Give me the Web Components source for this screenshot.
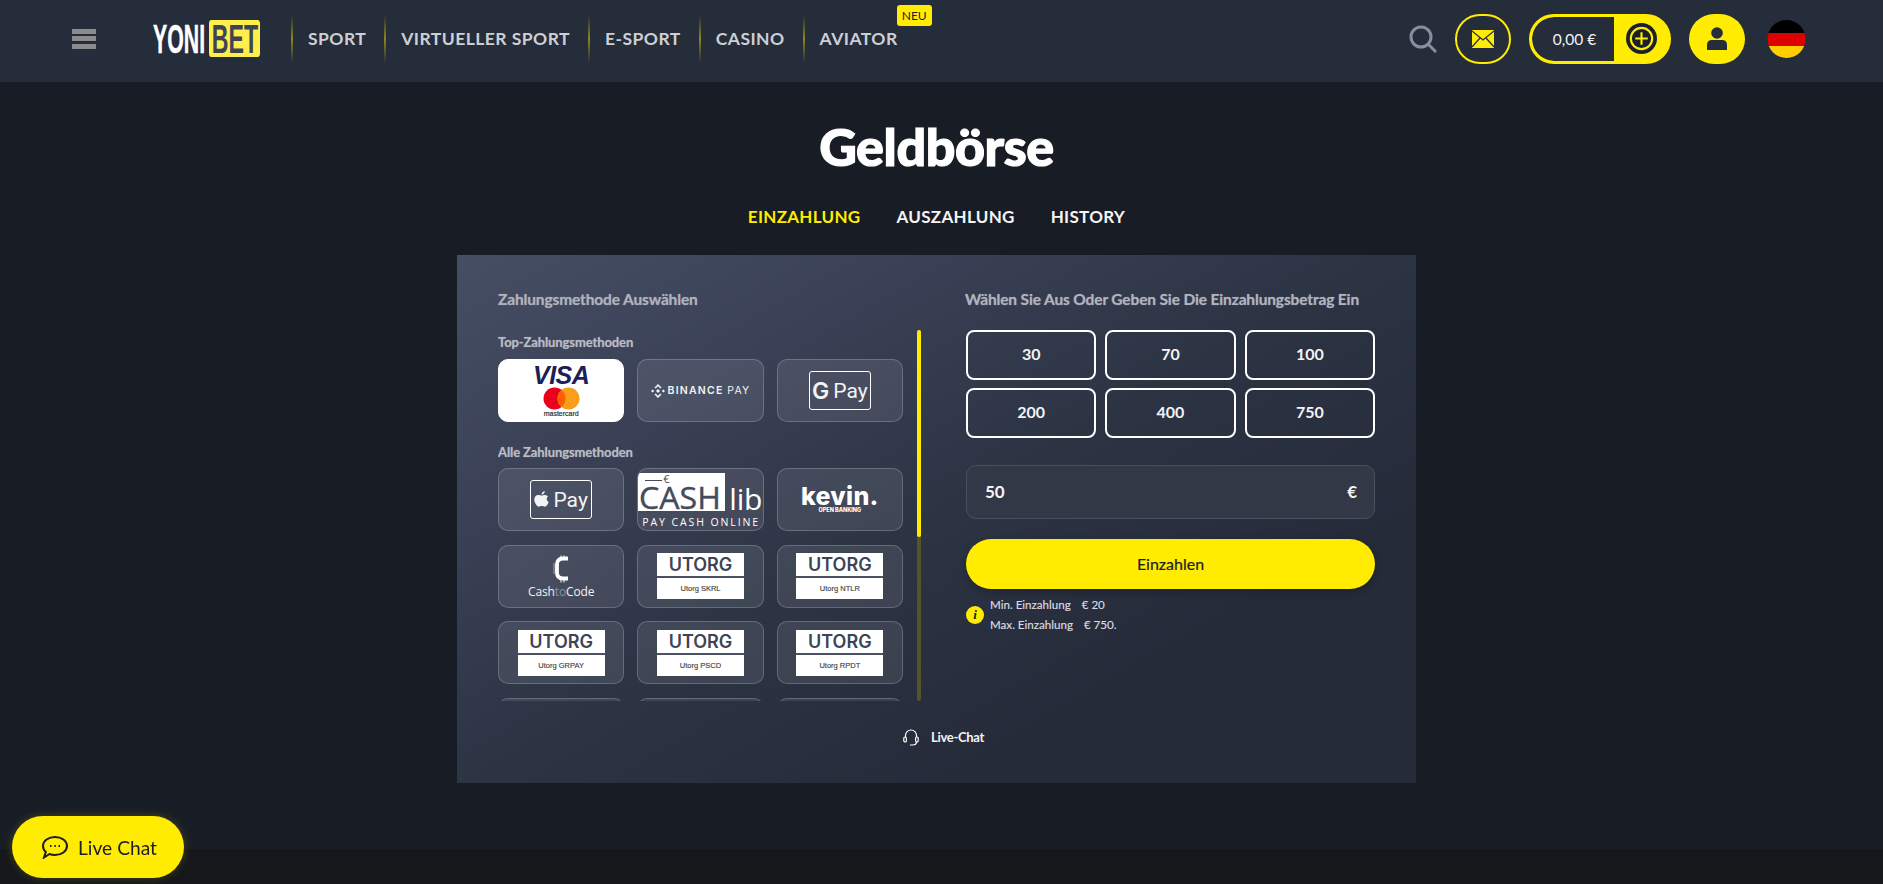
<!DOCTYPE html>
<html lang="de">
<head>
<meta charset="utf-8">
<title>Geldbörse</title>
<style>
    html, body { margin: 0; height: 884px; overflow: hidden; background: #181c25; }
    body { font-family: "Lato", "Noto Sans", sans-serif; color: #fff; }
</style>
</head>
<body>
<yb-header></yb-header>
<wallet-page></wallet-page>
<yb-footer></yb-footer>
<chat-button></chat-button>

<script>
function define(name, html) {
    customElements.define(name, class extends HTMLElement {
        constructor() {
            super();
            this.attachShadow({ mode: 'open' });
            this.shadowRoot.innerHTML = typeof html === 'function' ? html(this) : html;
        }
    });
}

// the logo letters are condensed by squeezing the svg viewBox
define('yb-logo', `
    <style>
        :host { display: flex; width: 108px; height: 37px; align-items: center; justify-content: space-between; }
        svg { display: block; overflow: visible; }
        text { font-family: "Liberation Sans", sans-serif; font-weight: 700; font-size: 41px; }
    </style>
    <svg width="54" height="37" viewBox="0 0 104 37" preserveAspectRatio="none"><text x="2" y="33" fill="#fff" stroke="#fff" stroke-width=".5">YONI</text></svg>
    <svg width="51" height="37" viewBox="0 0 90 37" preserveAspectRatio="none"><rect width="90" height="37" rx="4" fill="#ffef4a"/><text x="5" y="33" fill="#3f4454">BET</text></svg>
`);

define('nav-item', (el) => `
    <style>
        :host { display: block; position: relative; height: 48px; padding: 0 18px 0 17px; font-size: 17.5px; font-weight: 700; line-height: 47px; color: #cdcfd4; letter-spacing: .45px; white-space: nowrap; }
        :host::before { content: ""; position: absolute; left: 0; top: 0; width: 2px; height: 48px; background: linear-gradient(to bottom, transparent, #8c8714 50%, transparent); }
        .neu { position: absolute; right: -16px; top: -10px; background: #ffec00; color: #1b1e26; font-size: 12px; line-height: 21px; height: 21px; padding: 0 5px; border-radius: 3px; letter-spacing: 0; font-weight: 400; }
    </style>
    <slot></slot>${el.hasAttribute('neu') ? '<span class="neu">NEU</span>' : ''}
`);

define('yb-header', `
    <style>
        :host { display: flex; height: 82px; align-items: center; background: #252c3a; padding: 0 77px 5px 72px; box-sizing: border-box; }
        .burger { width: 24px; height: 20px; margin-right: 56px; display: flex; flex-direction: column; justify-content: space-between; }
        .burger i { display: block; height: 5px; background: #8a8b8d; }
        nav { display: flex; margin-left: 31px; }
        .right { margin-left: auto; display: flex; align-items: center; }
        .search { width: 28px; height: 28px; margin-right: 18px; }
        .round { width: 56px; height: 50px; box-sizing: border-box; border-radius: 25px; display: flex; align-items: center; justify-content: center; }
        .mail { border: 2px solid #ffec00; }
        .balance { width: 142px; height: 50px; box-sizing: border-box; margin: 0 18px; border-radius: 25px; border: 3px solid #ffec00; display: flex; background: #ffec00; overflow: hidden; }
        .amount { width: 82px; box-sizing: border-box; background: #252c3a; border-radius: 22px 0 0 22px; font-size: 15.5px; line-height: 44px; text-align: center; padding-left: 3px; color: #f2f3f4; }
        .plus { flex: 1; display: flex; align-items: center; justify-content: center; }
        .user { background: #ffec00; }
        .flag { width: 39px; height: 38px; margin-left: 22px; }
    </style>
    <div class="burger"><i></i><i></i><i></i></div>
    <yb-logo></yb-logo>
    <nav>
        <nav-item>SPORT</nav-item>
        <nav-item>VIRTUELLER SPORT</nav-item>
        <nav-item>E-SPORT</nav-item>
        <nav-item>CASINO</nav-item>
        <nav-item neu>AVIATOR</nav-item>
    </nav>
    <div class="right">
        <svg class="search" viewBox="0 0 28 28" fill="none" stroke="#8b8c9e" stroke-width="3"><circle cx="12" cy="12" r="10"/><path d="M19.5 19.5 L27 27"/></svg>
        <div class="round mail">
            <svg width="22" height="18" viewBox="0 0 22 18"><rect width="22" height="18" fill="#ffec00"/><path d="M0 1 L11 10 L22 1 M0 17 L8 8 M22 17 L14 8" fill="none" stroke="#252c3a" stroke-width="1.2"/></svg>
        </div>
        <div class="balance">
            <div class="amount">0,00 €</div>
            <div class="plus">
                <svg width="31" height="31" viewBox="0 0 32 32"><circle cx="16" cy="16" r="16" fill="#1c2029"/><circle cx="16" cy="16" r="11" fill="none" stroke="#ffec00" stroke-width="2.2"/><path d="M16 9.5 V22.5 M9.5 16 H22.5" stroke="#ffec00" stroke-width="2.2"/></svg>
            </div>
        </div>
        <div class="round user">
            <svg width="20" height="23" viewBox="0 0 20 23" fill="#252c3a"><circle cx="10" cy="6" r="5.8"/><path d="M0 23 V18 Q0 13 5 13 H15 Q20 13 20 18 V23 Z"/></svg>
        </div>
        <svg class="flag" viewBox="0 0 39 38"><clipPath id="c"><circle cx="19.5" cy="19" r="19"/></clipPath><g clip-path="url(#c)"><rect width="39" height="13" fill="#000"/><rect y="13" width="39" height="13" fill="#dd0000"/><rect y="26" width="39" height="12" fill="#ffce00"/></g></svg>
    </div>
`);

define('pay-card', `
    <style>
        :host { display: flex; height: 63px; box-sizing: border-box; align-items: center; justify-content: center; border: 1px solid rgba(255,255,255,.2); border-radius: 10px; background: rgba(255,255,255,.09); overflow: hidden; position: relative; }
        :host([selected]) { background: #fff; border-color: #fff; }
    </style>
    <slot></slot>
`);

define('visa-logo', `
    <style>
        :host { display: flex; flex-direction: column; align-items: center; font-family: "Liberation Sans", sans-serif; margin-top: 1px; }
        .visa { color: #1b2158; font-size: 25px; line-height: 20px; font-weight: 700; font-style: italic; letter-spacing: -.5px; }
        svg { display: block; margin-top: 2px; }
        .mc { color: #333; font-size: 7px; line-height: 8px; font-weight: 400; -webkit-text-stroke: .2px #333; }
    </style>
    <div class="visa">VISA</div>
    <svg width="37" height="23" viewBox="0 0 37 23"><circle cx="11.5" cy="11.5" r="11" fill="#eb001b"/><circle cx="25.5" cy="11.5" r="11" fill="#f79e1b"/><path d="M18.5 3 a11 11 0 0 1 0 17 a11 11 0 0 1 0 -17" fill="#ff5f00"/></svg>
    <div class="mc">mastercard</div>
`);

define('binance-logo', `
    <style>
        :host { display: flex; align-items: center; gap: 3px; color: #f2f3f4; font-family: "Inter", sans-serif; font-size: 10.5px; font-weight: 600; letter-spacing: 1.2px; white-space: nowrap; }
        b { font-weight: 400; }
    </style>
    <svg width="14" height="14" viewBox="0 0 14 14" fill="#f2f3f4"><path d="M7 0 L10.5 3.5 L9.4 4.6 L7 2.2 L4.6 4.6 L3.5 3.5 Z M7 14 L3.5 10.5 L4.6 9.4 L7 11.8 L9.4 9.4 L10.5 10.5 Z M0 7 L1.6 5.4 L3.2 7 L1.6 8.6 Z M14 7 L12.4 8.6 L10.8 7 L12.4 5.4 Z M7 5 L9 7 L7 9 L5 7 Z"/></svg>
    <span>BINANCE <b>PAY</b></span>
`);

define('wallet-logo', `
    <style>
        :host { display: flex; width: 62px; height: 39px; box-sizing: border-box; border: 1px solid #fff; border-radius: 3px; align-items: center; justify-content: center; gap: 4px; font-family: "Roboto", sans-serif; font-size: 21px; font-weight: 400; color: #f2f3f4; }
    </style>
    <slot></slot>
`);

define('cashlib-logo', `
    <style>
        :host { display: block; position: relative; width: 100%; height: 100%; font-family: "Open Sans", sans-serif; color: #fff; }
        .white { position: absolute; left: 0; top: 4px; width: 87px; height: 40px; box-sizing: border-box; background: #fff; color: #444b5d; border-bottom: 2px solid #444b5d; }
        .euro { position: absolute; left: 7px; top: 0; font-size: 11px; line-height: 12px; }
        .euro::before { content: ""; display: inline-block; width: 17px; height: 1px; background: #444b5d; vertical-align: middle; margin-right: 1px; }
        svg { position: absolute; left: 0; top: 12px; overflow: visible; }
        svg text { font-family: "Open Sans", sans-serif; font-size: 31px; fill: #444b5d; stroke: #444b5d; stroke-width: .4; }
        .lib { position: absolute; left: 91px; top: 15px; font-size: 30px; line-height: 30px; letter-spacing: -.2px; }
        .pay { position: absolute; left: 4px; top: 46px; font-size: 10.5px; line-height: 14px; letter-spacing: 1.9px; white-space: nowrap; }
    </style>
    <div class="white"><span class="euro">€</span><svg width="87" height="26" viewBox="0 0 84 26" preserveAspectRatio="none"><text x="1" y="24">CASH</text></svg></div>
    <div class="lib">lib</div>
    <div class="pay">PAY CASH ONLINE</div>
`);

define('kevin-logo', `
    <style>
        :host { display: block; text-align: center; color: #fff; font-family: "Inter", sans-serif; font-weight: 800; }
        .k { font-size: 25px; line-height: 22px; letter-spacing: .3px; }
        .o { font-size: 5.5px; line-height: 7px; }
    </style>
    <div class="k">kevin.</div>
    <div class="o">OPEN BANKING</div>
`);

define('cashtocode-logo', `
    <style>
        :host { display: flex; flex-direction: column; align-items: center; color: #f2f3f4; font-family: "Open Sans", sans-serif; font-size: 12px; line-height: 15px; letter-spacing: -.15px; margin-top: 2px; }
        svg { display: block; margin-bottom: 1px; }
        i { font-style: normal; opacity: .4; }
    </style>
    <svg width="17" height="28" viewBox="0 0 17 28" fill="none" stroke="#fff"><path d="M15 3.5 H10 Q4 3.5 4 9.5 V17.5 Q4 23.5 10 23.5 H15" stroke-width="3.8"/><path d="M8 .5 V3.5 M11 .5 V3.5 M8 23.5 V27.5 M11 23.5 V27.5" stroke-width="1"/><path d="M1 8 V19" stroke-width="1" stroke="#aaa"/></svg>
    <div>Cash<i>to</i>Code</div>
`);

define('utorg-logo', (el) => `
    <style>
        :host { display: block; width: 87px; font-family: "Liberation Sans", sans-serif; text-align: center; background: #fff; }
        .top { height: 23px; font-family: "Inter", sans-serif; font-weight: 600; font-size: 18px; line-height: 23px; color: #3d4456; border-bottom: 2px solid #4a5163; }
        .sub { height: 21px; font-size: 7.5px; line-height: 21px; color: #444; -webkit-text-stroke: .15px #444; }
    </style>
    <div class="top">UTORG</div>
    <div class="sub">Utorg ${el.getAttribute('name')}</div>
`);

define('method-list', `
    <style>
        :host { display: block; width: 405px; height: 371px; overflow: hidden; }
        h4 { margin: 0; font-size: 13px; line-height: 16px; height: 29px; padding-top: 4px; box-sizing: border-box; font-weight: 700; color: #b9bcc5; letter-spacing: -.1px; text-shadow: 0 0 1px rgba(185,188,197,.6); }
        h4.all { margin-top: 16px; padding-top: 6px; height: 30px; }
        .grid { display: grid; grid-template-columns: repeat(3, 1fr); gap: 13.6px 13px; }
    </style>
    <h4>Top-Zahlungsmethoden</h4>
    <div class="grid">
        <pay-card selected><visa-logo></visa-logo></pay-card>
        <pay-card><binance-logo></binance-logo></pay-card>
        <pay-card><wallet-logo><b style="font-family:'Inter',sans-serif;font-size:23px;font-weight:600">G</b>Pay</wallet-logo></pay-card>
    </div>
    <h4 class="all">Alle Zahlungsmethoden</h4>
    <div class="grid">
        <pay-card><wallet-logo>
            <svg width="15" height="18" viewBox="0 0 15 18" fill="#f2f3f4"><path d="M10.8 0 C10.9 1.6 9.5 3.6 7.6 3.7 C7.4 2 9 0.2 10.8 0 Z M7.7 4.6 C8.6 4.6 9.7 3.8 11 3.9 C12.4 4 13.5 4.6 14.1 5.6 C12 6.9 12.4 10 14.7 11 C14.1 12.8 12.5 15.7 10.8 15.7 C9.6 15.7 9.2 15 7.8 15 C6.4 15 5.9 15.7 4.8 15.7 C2.9 15.7 .3 11.7 .3 8.6 C.3 5.6 2.2 3.9 4.1 3.9 C5.6 3.9 6.8 4.6 7.7 4.6 Z"/></svg>Pay</wallet-logo></pay-card>
        <pay-card><cashlib-logo></cashlib-logo></pay-card>
        <pay-card><kevin-logo></kevin-logo></pay-card>
        <pay-card><cashtocode-logo></cashtocode-logo></pay-card>
        <pay-card><utorg-logo name="SKRL"></utorg-logo></pay-card>
        <pay-card><utorg-logo name="NTLR"></utorg-logo></pay-card>
        <pay-card><utorg-logo name="GRPAY"></utorg-logo></pay-card>
        <pay-card><utorg-logo name="PSCD"></utorg-logo></pay-card>
        <pay-card><utorg-logo name="RPDT"></utorg-logo></pay-card>
        <pay-card></pay-card>
        <pay-card></pay-card>
        <pay-card></pay-card>
    </div>
`);

define('amount-form', `
    <style>
        :host { display: block; width: 409px; }
        .amounts { display: grid; grid-template-columns: repeat(3, 1fr); gap: 8.5px 9px; }
        .amounts div { height: 49.5px; box-sizing: border-box; border: 2px solid #fff; border-radius: 8px; text-align: center; line-height: 44px; font-size: 16px; font-weight: 700; color: #f4f4f6; }
        .input { margin-top: 27.5px; height: 54px; box-sizing: border-box; border: 1px solid #4a5060; border-radius: 10px; background: #323846; display: flex; justify-content: space-between; padding: 0 17px 0 18px; line-height: 52px; font-size: 17px; font-weight: 700; color: #f4f4f6; }
        .go { margin-top: 20px; height: 50px; border-radius: 25px; background: #ffec00; color: #1b1e26; text-align: center; line-height: 50px; font-size: 16px; -webkit-text-stroke: .2px #1b1e26; box-shadow: 0 3px 8px rgba(0,0,0,.25); }
        .info { margin-top: 6px; display: flex; align-items: center; gap: 6px; font-size: 11.6px; line-height: 19.5px; color: #dcdde1; -webkit-text-stroke: .15px #dcdde1; }
        .i { width: 18px; height: 18px; border-radius: 50%; background: #ffec00; color: #1b1e26; font: italic 700 13px/18px "Liberation Serif", serif; text-align: center; -webkit-text-stroke: 0; }
        .info span { margin-left: 8px; }
    </style>
    <div class="amounts">
        <div>30</div><div>70</div><div>100</div>
        <div>200</div><div>400</div><div>750</div>
    </div>
    <div class="input"><span>50</span><span>€</span></div>
    <div class="go">Einzahlen</div>
    <div class="info">
        <div class="i">i</div>
        <div>
            <div>Min. Einzahlung <span>€ 20</span></div>
            <div>Max. Einzahlung <span>€ 750.</span></div>
        </div>
    </div>
`);

define('wallet-panel', `
    <style>
        :host { display: block; width: 959px; height: 528px; box-sizing: border-box; padding: 34px 41px 0; background: linear-gradient(150deg, #464e64 0%, #3a4156 25%, #2c3343 50%, #252b39 75%, #252b39 100%); }
        .cols { display: flex; gap: 45px; }
        h3 { margin: 0 0 21px; height: 20px; font-size: 15.5px; line-height: 20px; font-weight: 700; color: #b0b3bd; white-space: nowrap; letter-spacing: -.14px; text-shadow: 0 0 1px rgba(176,179,189,.6); }
        .right h3 { margin-left: -1px; }
        .scroll { display: flex; gap: 14px; }
        .bar { width: 4px; height: 371px; background: #55532a; border-radius: 2px; }
        .bar i { display: block; height: 207px; background: #ffec00; border-radius: 2px; }
        .help { margin-top: 26px; height: 20px; display: flex; align-items: center; justify-content: center; gap: 12px; padding-left: 14px; font-size: 13px; font-weight: 700; color: #f4f4f6; letter-spacing: -.3px; }
    </style>
    <div class="cols">
        <div class="left">
            <h3>Zahlungsmethode Auswählen</h3>
            <div class="scroll"><method-list></method-list><div class="bar"><i></i></div></div>
        </div>
        <div class="right">
            <h3>Wählen Sie Aus Oder Geben Sie Die Einzahlungsbetrag Ein</h3>
            <amount-form></amount-form>
        </div>
    </div>
    <div class="help">
        <svg width="16" height="17" viewBox="0 0 16 17" fill="none" stroke="#fff" stroke-width="1.2"><path d="M2.5 8 V6.5 a5.5 5.5 0 0 1 11 0 V8"/><rect x=".8" y="8" width="2.6" height="5" rx="1.3"/><rect x="12.6" y="8" width="2.6" height="5" rx="1.3"/><path d="M13.5 13 Q13.5 16 9.5 16 H7"/></svg>
        <span>Live-Chat</span>
    </div>
`);

define('wallet-page', `
    <style>
        :host { display: flex; flex-direction: column; align-items: center; height: 767px; box-sizing: border-box; padding-right: 10px; }
        h1 { margin: 28.5px 0 0; height: 70px; font-size: 52px; line-height: 70px; font-weight: 900; color: #fff; letter-spacing: -.4px; -webkit-text-stroke: 1.2px #fff; }
        .tabs { margin-top: 24px; height: 24px; margin-bottom: 26.5px; display: flex; gap: 36px; font-size: 17px; line-height: 24px; font-weight: 700; color: #f4f4f6; letter-spacing: .3px; }
        .on { color: #ffec00; }
    </style>
    <h1>Geldbörse</h1>
    <div class="tabs"><span class="on">EINZAHLUNG</span><span>AUSZAHLUNG</span><span>HISTORY</span></div>
    <wallet-panel></wallet-panel>
`);

define('yb-footer', `
    <style>
        :host { display: block; height: 35px; background: #15171b; }
    </style>
`);

define('chat-button', `
    <style>
        :host { position: fixed; left: 12px; top: 816px; width: 172px; height: 62px; box-sizing: border-box; padding-left: 3px; border-radius: 31px; background: #ffec00; color: #1b1e26; display: flex; align-items: center; justify-content: center; gap: 10px; font-size: 19.2px; box-shadow: 0 0 10px rgba(255,236,0,.2); }
    </style>
    <svg width="26" height="24" viewBox="0 0 26 24" fill="none" stroke="#1b1e26" stroke-width="2"><path d="M13 2 C19.5 2 25 5.8 25 11 C25 16.2 19.5 20 13 20 C11 20 9 19.6 7.5 19 L2 22.5 L3.8 17 C2 15.5 1 13.5 1 11 C1 5.8 6.5 2 13 2 Z"/><path d="M8 11 h1.5 M12.3 11 h1.5 M16.5 11 h1.5" stroke-width="2.2"/></svg>
    <span>Live Chat</span>
`);
</script>
</body>
</html>
